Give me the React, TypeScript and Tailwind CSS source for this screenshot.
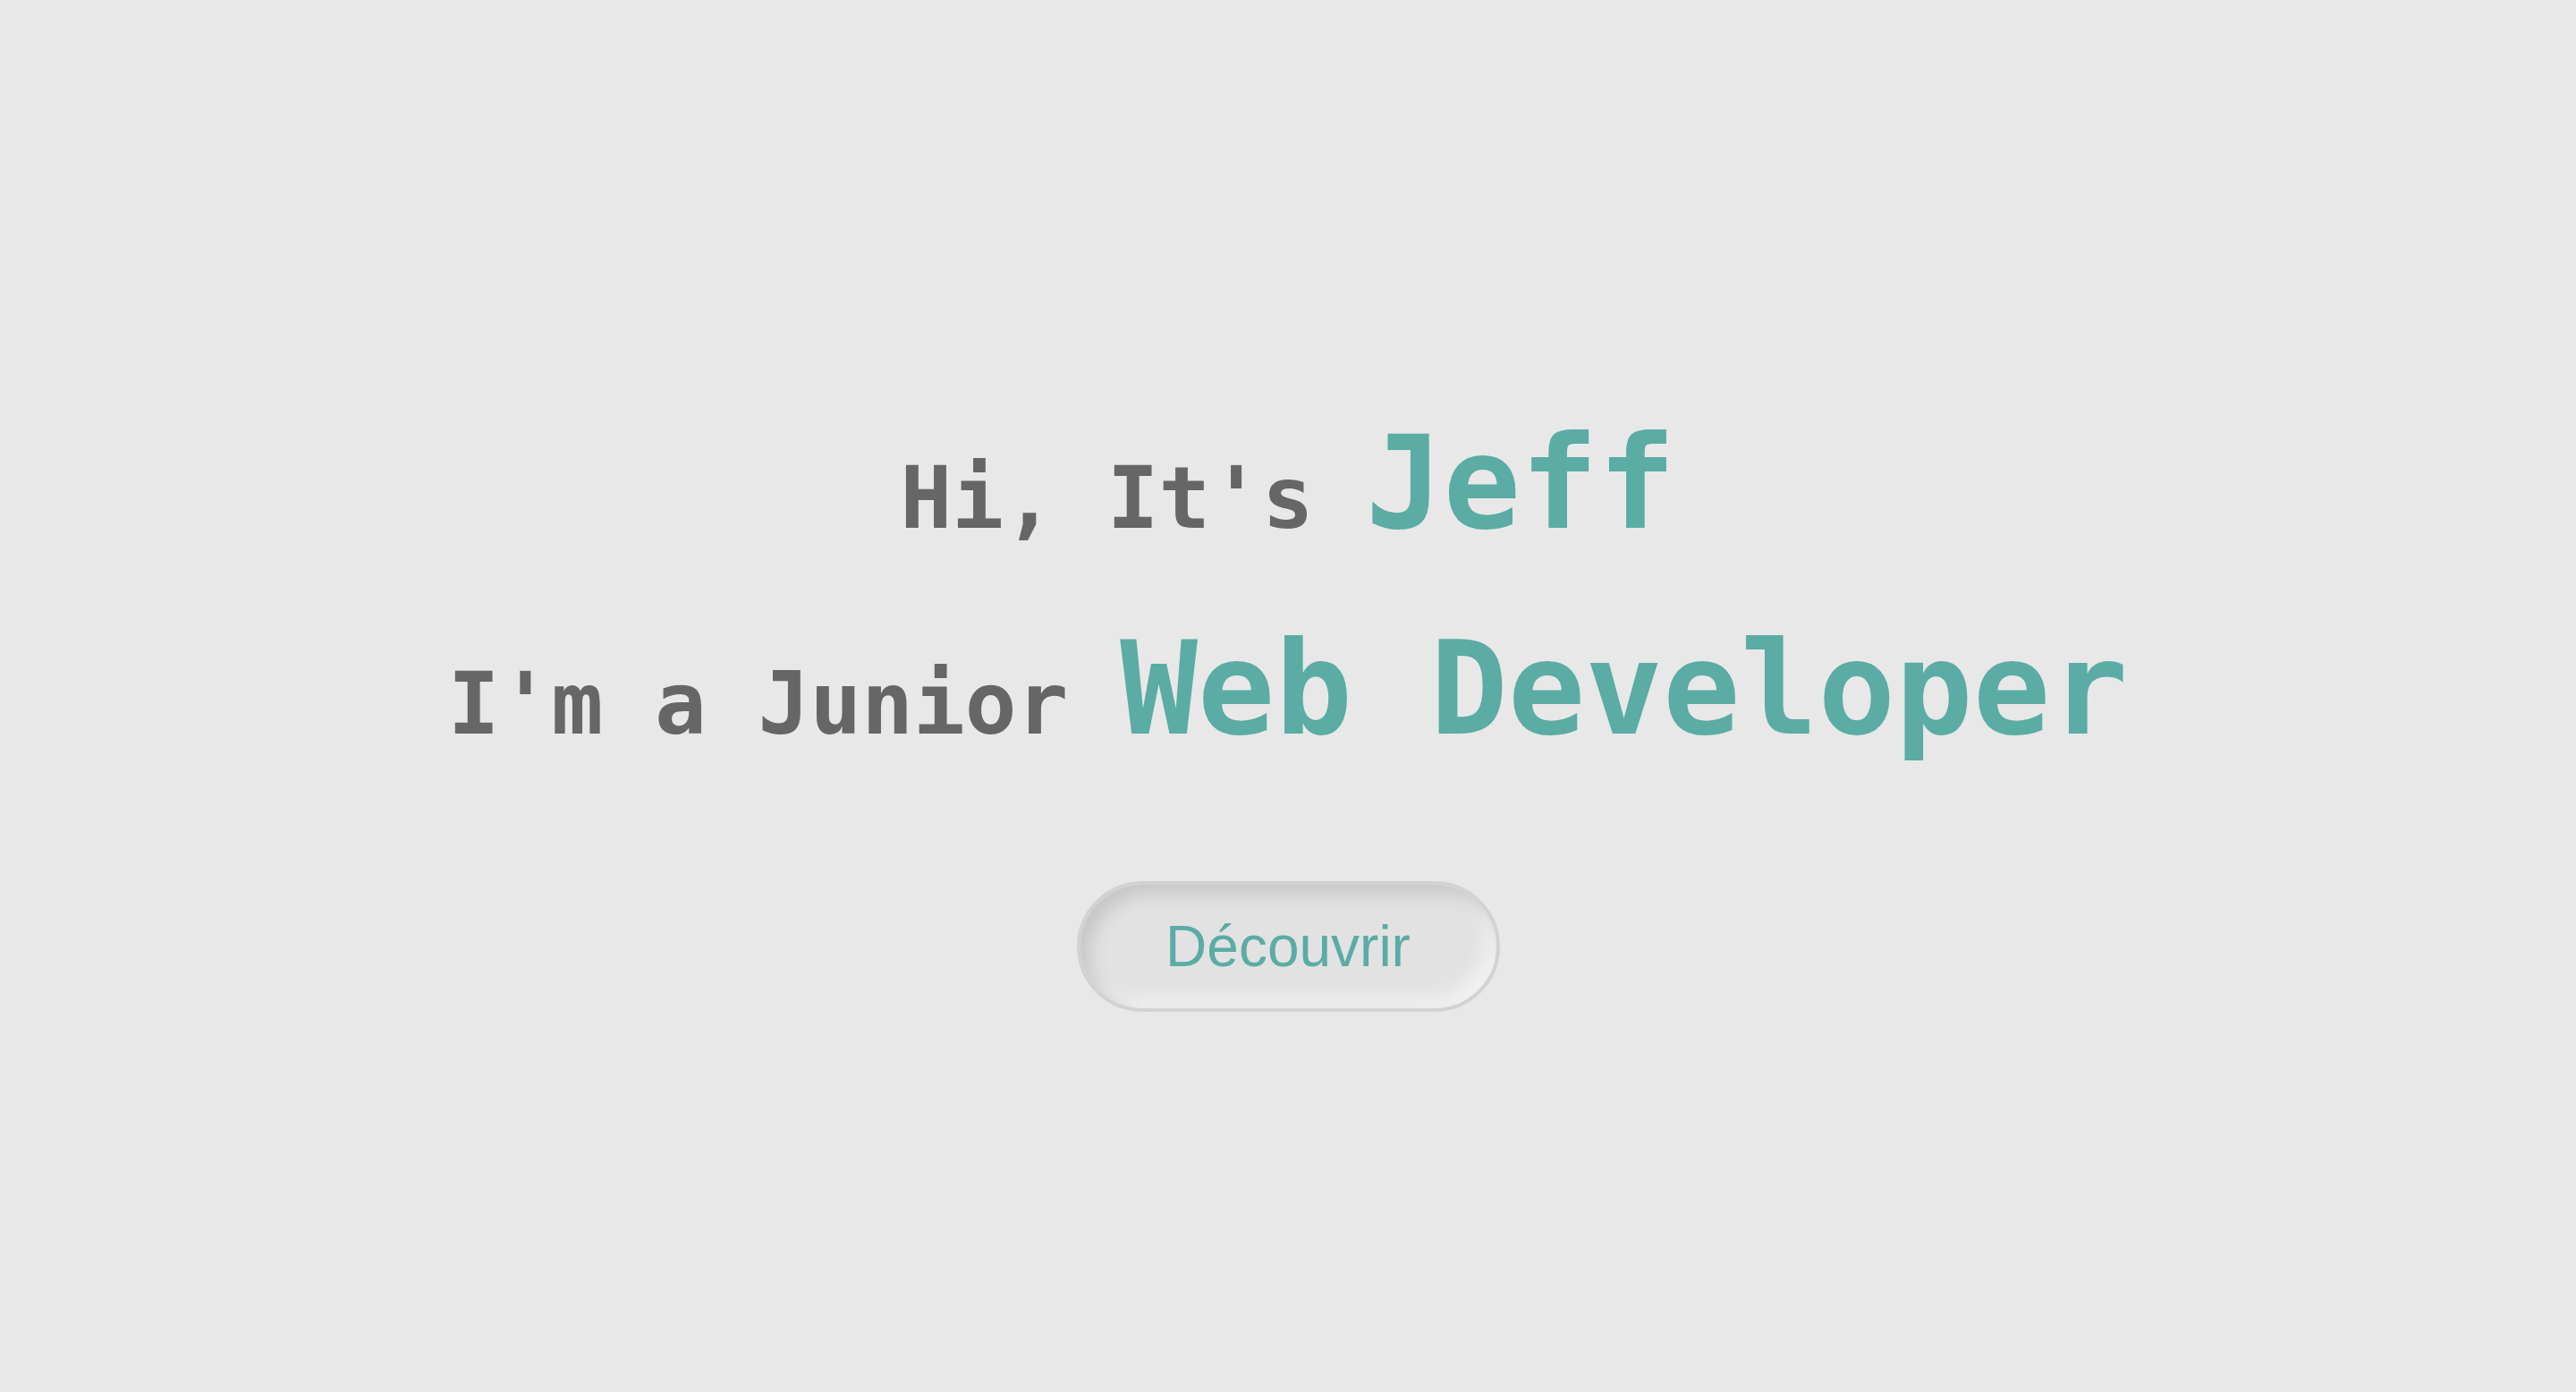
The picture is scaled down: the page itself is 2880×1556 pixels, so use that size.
import React from "react";

export default function App() {
  return (
    <div className="min-h-screen w-full bg-[#e8e8e8] flex flex-col items-center pt-[468px] pb-10">
      <h1
        className="m-0 text-center font-bold text-[#666666] whitespace-pre text-[144px] leading-[144px]"
        style={{ fontFamily: '"DejaVu Sans Mono", "Liberation Mono", monospace' }}
      >
        <span className="text-[96px] leading-none">{"Hi, It's "}</span>
        <span className="text-[#5aaca4]">Jeff</span>
      </h1>
      <h2
        className="mt-[86px] text-center font-bold text-[#666666] whitespace-pre text-[144px] leading-[144px]"
        style={{ fontFamily: '"DejaVu Sans Mono", "Liberation Mono", monospace' }}
      >
        <span className="text-[96px] leading-none">{"I'm a Junior "}</span>
        <span className="text-[#5aaca4]">Web Developer</span>
      </h2>
      <button
        className="mt-[143px] w-[473px] h-[146px] rounded-full border-[4px] border-[#d2d2d2] bg-[#e2e2e2] text-[#5aaca4] text-[64px] leading-none flex items-center justify-center shadow-[inset_10px_10px_20px_#c6c6c6,inset_-10px_-10px_20px_#f4f4f4]"
        style={{ fontFamily: '"Liberation Sans", Arial, sans-serif' }}
      >
        Découvrir
      </button>
    </div>
  );
}
